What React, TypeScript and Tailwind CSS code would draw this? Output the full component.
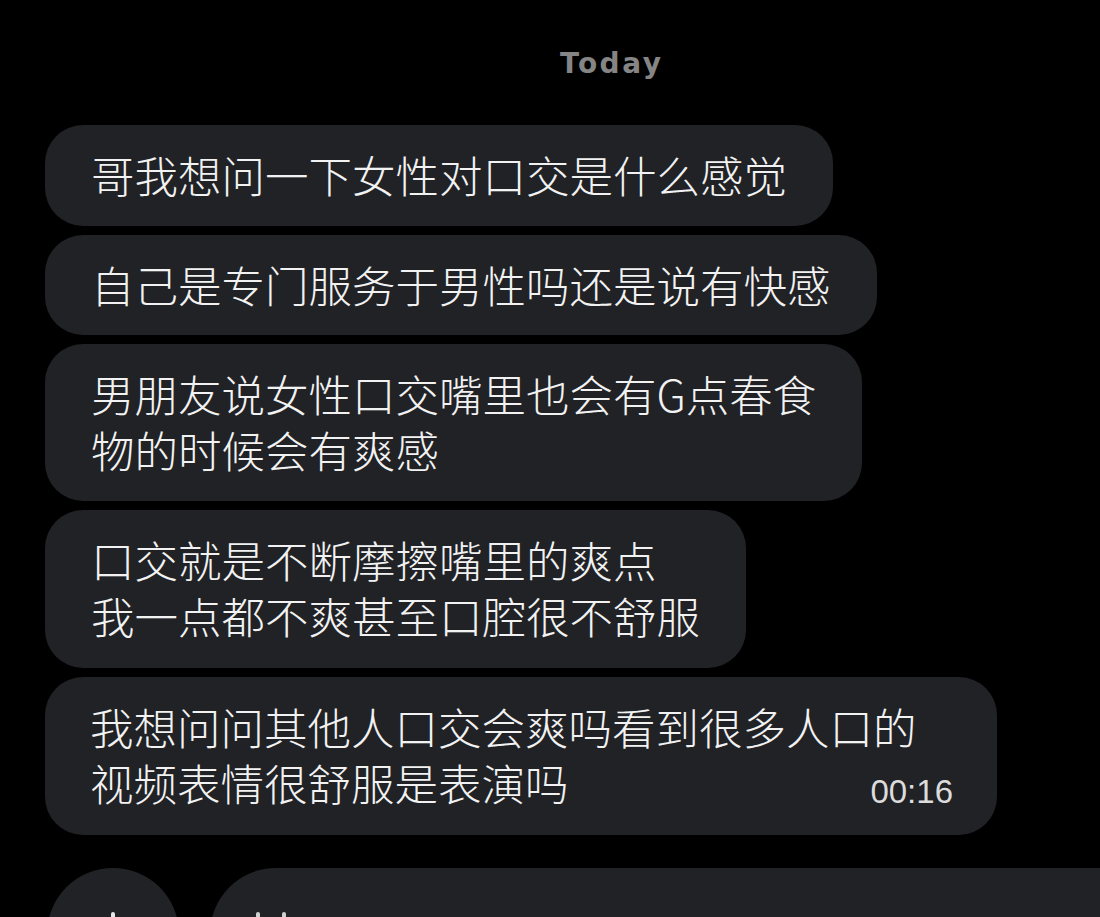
import React from "react";

const cjk = { fontFamily: '"Noto Sans CJK SC", "Noto Sans", sans-serif' };

function Bubble({ lines, className = "" }: { lines: string[]; className?: string }) {
  return (
    <div
      className={`shrink-0 self-start rounded-[38px] bg-[#212226] pl-[46px] pr-[46px] py-[22px] text-[43.5px] font-light leading-[56px] text-[#f2f2f2] whitespace-nowrap ${className}`}
      style={cjk}
    >
      {lines.map((l, i) => (
        <div key={i}>{l}</div>
      ))}
    </div>
  );
}

export default function App() {
  return (
    <div className="w-[1100px] h-[917px] overflow-hidden bg-black flex flex-col">
      <div className="shrink-0 h-[125px] flex items-start pl-[560px] pt-[47px]">
        <span
          className="text-[28px] leading-[34px] font-bold tracking-[2.5px] text-[#858585]"
          style={{ fontFamily: '"DejaVu Sans", sans-serif' }}
        >
          Today
        </span>
      </div>
      <div className="shrink-0 flex flex-col gap-[9px] pl-[45px]">
        <Bubble lines={["哥我想问一下女性对口交是什么感觉"]} className="h-[101px]" />
        <Bubble lines={["自己是专门服务于男性吗还是说有快感"]} className="h-[100px]" />
        <Bubble lines={["男朋友说女性口交嘴里也会有G点春食", "物的时候会有爽感"]} className="h-[157px]" />
        <Bubble lines={["口交就是不断摩擦嘴里的爽点", "我一点都不爽甚至口腔很不舒服"]} className="h-[158px]" />
        <div
          className="shrink-0 self-start w-[952px] h-[158px] rounded-[38px] bg-[#212226] pl-[45px] pr-[44px] py-[22px] text-[43.5px] font-light leading-[56px] text-[#f2f2f2] whitespace-nowrap"
          style={cjk}
        >
          <div>我想问问其他人口交会爽吗看到很多人口的</div>
          <div className="flex items-end justify-between">
            <span>视频表情很舒服是表演吗</span>
            <span
              className="text-[33px] leading-[33px] font-normal text-[#dcdcdc] mb-[3px]"
              style={{ fontFamily: '"Liberation Sans", sans-serif' }}
            >
              00:16
            </span>
          </div>
        </div>
      </div>
      <div className="shrink-0 flex gap-[31px] pl-[47px] pt-[33px]">
        <div className="w-[132px] h-[132px] shrink-0 rounded-full bg-[#212226] flex justify-center pt-[44px]">
          <div className="w-[4px] h-[20px] rounded-sm bg-[#e8e8e8]" />
        </div>
        <div className="flex-1 h-[132px] rounded-l-[66px] bg-[#212226] flex gap-[22px] pl-[46px] pt-[44px]">
          <div className="w-[4px] h-[12px] rounded-sm bg-[#cfcfcf]" />
          <div className="w-[4px] h-[12px] rounded-sm bg-[#cfcfcf]" />
        </div>
      </div>
    </div>
  );
}
